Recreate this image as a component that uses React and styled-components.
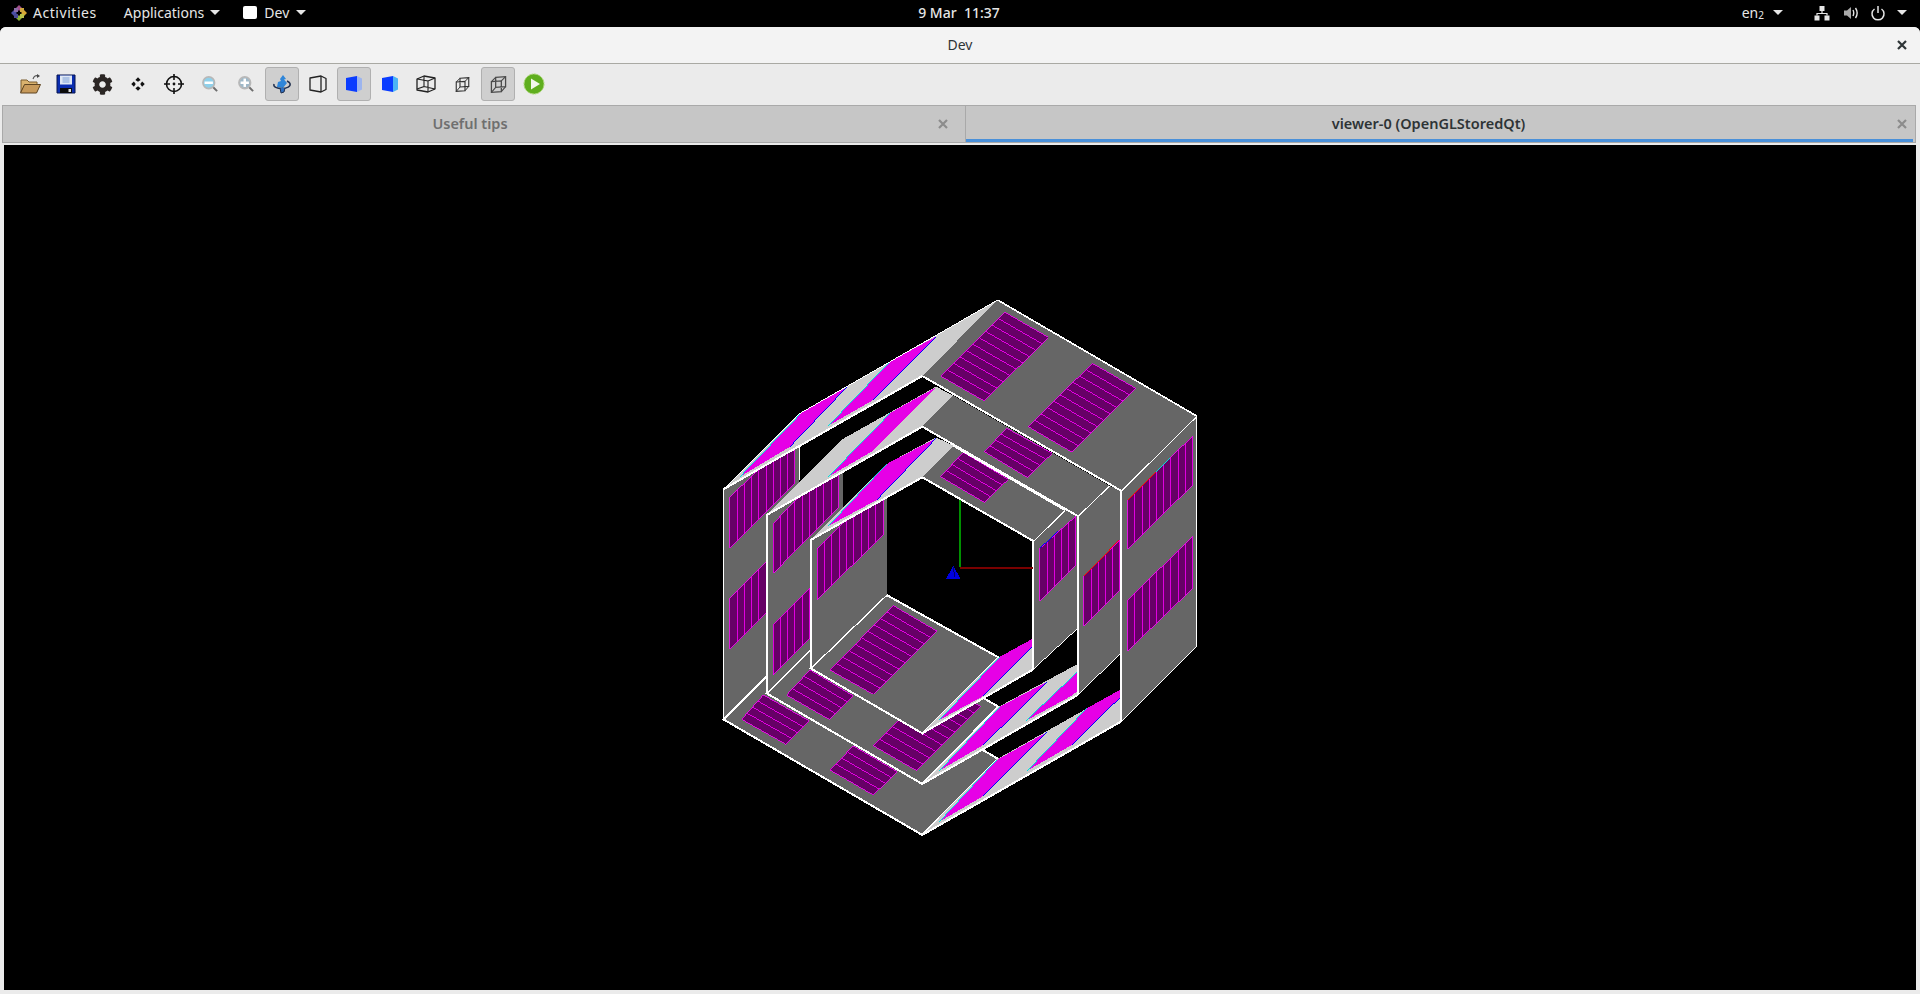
import React from 'react';
import styled, { createGlobalStyle } from 'styled-components';
import { FaCog } from 'react-icons/fa';

const GlobalStyle = createGlobalStyle`
  html, body {
    margin: 0;
    padding: 0;
    background: #000;
  }
  body {
    font-family: "Noto Sans", "Open Sans", sans-serif;
    overflow: hidden;
  }
`;

const Screen = styled.div`
  width: 1920px;
  height: 994px;
  display: flex;
  flex-direction: column;
  background: #000;
`;

const TopBar = styled.div`
  height: 27px;
  flex: none;
  display: grid;
  grid-template-columns: 1fr auto 1fr;
  align-items: center;
  color: #e6e6e6;
  font-size: 14px;
  padding: 0 13px 2px 11px;
  box-sizing: border-box;
`;

const TopLeft = styled.div`
  display: flex;
  align-items: center;
`;

const TopRight = styled.div`
  display: flex;
  align-items: center;
  justify-content: flex-end;
`;

const TopItem = styled.span`
  display: flex;
  align-items: center;
  gap: ${p => p.$gap || 6}px;
  margin-left: ${p => p.$left || 0}px;
  letter-spacing: ${p => p.$track || 0}px;
  white-space: pre;
`;

const Caret = styled.i`
  display: block;
  width: 0;
  height: 0;
  border-left: 5px solid transparent;
  border-right: 5px solid transparent;
  border-top: 5px solid #e6e6e6;
`;

const AppDot = styled.i`
  display: block;
  width: 14px;
  height: 13px;
  background: #fff;
  border-radius: 2px;
`;

const Sub = styled.span`
  font-size: 10px;
  position: relative;
  top: 1px;
`;

const Clock = styled.div`
  font-weight: 500;
  white-space: pre;
`;

const Win = styled.div`
  flex: 1;
  display: flex;
  flex-direction: column;
  background: #ebebeb;
  border-radius: 6px 6px 0 0;
  min-height: 0;
`;

const TitleBar = styled.div`
  height: 37px;
  flex: none;
  display: flex;
  align-items: center;
  justify-content: center;
  position: relative;
  background: #f3f3f3;
  border-bottom: 1px solid #a9a9a3;
  border-radius: 6px 6px 0 0;
  font-size: 14px;
  padding-bottom: 2px;
  color: #2e3436;
  box-sizing: border-box;
`;

const CloseGlyph = styled.svg`
  position: absolute;
  right: ${p => p.$right}px;
  top: 50%;
  width: 10px;
  height: 10px;
  margin-top: -5px;
  stroke: ${p => p.$color};
  stroke-width: 2.2;
  fill: none;
`;

const Toolbar = styled.div`
  height: 41px;
  flex: none;
  display: flex;
  align-items: center;
  gap: 2px;
  padding: 0 0 1px 13px;
  box-sizing: border-box;
`;

const ToolButton = styled.div`
  width: 34px;
  height: 34px;
  box-sizing: border-box;
  display: flex;
  align-items: center;
  justify-content: center;
  border-radius: 3px;
  border: 1px solid ${p => (p.$on ? '#b0b0b0' : 'transparent')};
  background: ${p => (p.$on ? '#cfcfcf' : 'transparent')};
`;

const Tabs = styled.div`
  height: 38px;
  flex: none;
  display: flex;
  padding: 0 4px 0 2px;
  box-sizing: border-box;
`;

const Tab = styled.div`
  flex: none;
  width: ${p => p.$width}px;
  position: relative;
  display: flex;
  align-items: center;
  justify-content: center;
  background: #c6c6c6;
  border: 1px solid #a9a9a9;
  border-left-width: ${p => (p.$first ? 1 : 0)}px;
  box-sizing: border-box;
  font-size: 14.5px;
  font-weight: 600;
  padding: 0 ${p => p.$pad}px 2px 0;
  color: ${p => (p.$active ? '#2e3436' : '#6f6f6f')};
  &::after {
    content: '';
    display: ${p => (p.$active ? 'block' : 'none')};
    position: absolute;
    left: 0;
    right: 2px;
    bottom: 0;
    height: 3px;
    background: #4a90d9;
  }
`;

const Viewer = styled.div`
  flex: 1;
  margin: 2px 4px 4px;
  background: #000;
  min-height: 0;
`;

const Scene = styled.svg`
  display: block;
  width: 100%;
  height: 100%;
  shape-rendering: crispEdges;
`;

const Icon = styled.svg`
  display: block;
  width: ${p => p.$size || 24}px;
  height: ${p => p.$size || 24}px;
`;

const GearIcon = styled(FaCog)`
  display: block;
  width: 21px;
  height: 21px;
  color: #2b2624;
`;

// ---- 3d scene, coordinates are 3x page pixels, origin at (700, 280)

const pts = arr => arr.map(p => p.join(',')).join(' ');
const lerp = (a, b, t) => [a[0] + (b[0] - a[0]) * t, a[1] + (b[1] - a[1]) * t];

const GREY = '#666666';
const LIGHT = '#cdcdcd';

const Panel = ({ c, n }) => {
  const lines = [];
  for (let i = 1; i < n; i++) {
    const a = lerp(c[0], c[3], i / n);
    const b = lerp(c[1], c[2], i / n);
    lines.push(<line key={i} x1={a[0]} y1={a[1]} x2={b[0]} y2={b[1]} stroke="#ff00ff" strokeWidth="2.4" />);
  }
  return (
    <g>
      <polygon points={pts(c)} fill="#660066" stroke="#ff00ff" strokeWidth="2.4" />
      {lines}
    </g>
  );
};

const Strip = ({ c, line = '#0000ff', lineFrom = 3, lineTo = 2 }) => (
  <g>
    <polygon points={pts(c)} fill="#e600e6" />
    <line x1={c[lineFrom][0]} y1={c[lineFrom][1]} x2={c[lineTo][0]} y2={c[lineTo][1]} stroke={line} strokeWidth="3" />
    <line x1={c[0][0]} y1={c[0][1]} x2={c[1][0]} y2={c[1][1]} stroke="#00e0e0" strokeWidth="3" />
  </g>
);

const Face = ({ p, fill = GREY, w = 0 }) => (
  <polygon points={pts(p)} fill={fill} stroke={w ? '#ffffff' : 'none'} strokeWidth={w} />
);

const Edge = ({ d, w = 6 }) => (
  <polyline points={pts(d)} fill="none" stroke="#ffffff" strokeWidth={w} />
);

const Accent = ({ a, b, color }) => (
  <line x1={a[0]} y1={a[1]} x2={b[0]} y2={b[1]} stroke={color} strokeWidth="3" />
);

const Model = () => (
  <g transform="translate(700 280) scale(0.33333)">
    {/* bottom plates and left walls */}
    <Face p={[[70, 1318], [667, 1665], [895, 1437], [298, 1090]]} w={6} />
    <Panel c={[[190, 1245], [328, 1323], [258, 1393], [125, 1318]]} n={4} />
    <Panel c={[[460, 1398], [592, 1475], [520, 1545], [390, 1470]]} n={4} />
    <Face p={[[70, 628], [298, 498], [298, 1090], [70, 1318]]} />
    <Panel c={[[90, 652], [90, 805], [285, 610], [285, 460]]} n={9} />
    <Panel c={[[90, 955], [90, 1108], [285, 913], [285, 760]]} n={9} />
    <Edge d={[[298, 1090], [70, 1318], [70, 628]]} w={4} />
    <Edge d={[[298, 600], [298, 498]]} w={3} />

    <Face p={[[200, 1240], [667, 1512], [895, 1280], [430, 1010]]} w={6} />
    <Panel c={[[330, 1170], [460, 1248], [388, 1318], [260, 1245]]} n={4} />
    <Panel c={[[712, 1205], [842, 1280], [650, 1472], [520, 1397]]} n={10} />
    <Face p={[[200, 705], [430, 575], [430, 1010], [200, 1240]]} />
    <Panel c={[[220, 730], [220, 880], [415, 682], [415, 530]]} n={9} />
    <Panel c={[[220, 1033], [220, 1185], [415, 990], [415, 838]]} n={9} />
    <Edge d={[[430, 1010], [200, 1240]]} w={3} />
    <Edge d={[[200, 1240], [200, 705]]} />

    <Face p={[[332, 1165], [667, 1360], [895, 1132], [560, 945]]} w={6} />
    <Panel c={[[580, 977], [710, 1053], [520, 1243], [390, 1170]]} n={10} />
    <Face p={[[332, 780], [560, 650], [560, 945], [332, 1165]]} />
    <Panel c={[[352, 805], [352, 958], [550, 765], [550, 610]]} n={9} />
    <Edge d={[[560, 945], [332, 1165]]} w={3} />
    <Edge d={[[332, 1165], [332, 780]]} />

    {/* light strips at the lower right */}
    <Face p={[[667, 1665], [1263, 1325], [1263, 1228], [890, 1438]]} fill={LIGHT} />
    <Strip c={[[718, 1625], [890, 1440], [1040, 1357], [850, 1548]]} />
    <Strip c={[[982, 1472], [1160, 1285], [1263, 1228], [1263, 1250], [1115, 1395]]} lineFrom={4} lineTo={3} />
    <Edge d={[[667, 1665], [1263, 1325]]} />
    <Face p={[[667, 1512], [1133, 1245], [1133, 1152], [900, 1278]]} fill={LIGHT} />
    <Strip c={[[718, 1472], [900, 1280], [1042, 1205], [850, 1395]]} />
    <Strip c={[[978, 1322], [1133, 1175], [1133, 1233], [1110, 1250]]} line="#ff0000" lineFrom={0} lineTo={1} />
    <Edge d={[[667, 1512], [1133, 1245]]} />
    <Face p={[[667, 1360], [1000, 1168], [1000, 1075], [895, 1133]]} fill={LIGHT} />
    <Strip c={[[718, 1320], [900, 1130], [1000, 1075], [1000, 1098], [850, 1248]]} lineFrom={4} lineTo={3} />
    <Edge d={[[667, 1360], [1000, 1168]]} />

    {/* right walls */}
    <Face p={[[1000, 783], [1095, 690], [1133, 708], [1133, 1045], [1000, 1168]]} />
    <Panel c={[[1020, 805], [1020, 962], [1128, 855], [1128, 708]]} n={5} />
    <Edge d={[[1095, 690], [1000, 783], [1000, 1168]]} />
    <Edge d={[[1000, 1168], [1133, 1045]]} w={3} />
    <Face p={[[1133, 708], [1228, 617], [1263, 632], [1263, 1120], [1133, 1245]]} />
    <Panel c={[[1152, 888], [1152, 1037], [1260, 930], [1260, 780]]} n={5} />
    <Edge d={[[1228, 617], [1133, 708], [1133, 1245]]} />
    <Edge d={[[1133, 1245], [1263, 1120]]} w={3} />
    <Face p={[[1263, 632], [1490, 408], [1490, 1100], [1263, 1325]]} />
    <Panel c={[[1283, 660], [1283, 808], [1478, 615], [1478, 468]]} n={9} />
    <Panel c={[[1283, 960], [1283, 1113], [1478, 925], [1478, 770]]} n={9} />
    <Edge d={[[1490, 408], [1263, 632], [1263, 1325]]} />
    <Edge d={[[1263, 1325], [1490, 1100], [1490, 408]]} w={3} />
    <Accent a={[1283, 660]} b={[1370, 575]} color="#ff0000" />
    <Accent a={[1370, 575]} b={[1410, 535]} color="#00e0e0" />
    <Accent a={[1152, 888]} b={[1258, 780]} color="#ff0000" />
    <Accent a={[1020, 805]} b={[1075, 752]} color="#0000ff" />

    {/* top plates, inner one first */}
    <Face p={[[760, 497], [1095, 690], [1000, 783], [667, 592]]} />
    <Panel c={[[790, 517], [925, 598], [853, 667], [722, 590]]} n={4} />
    <Edge d={[[1000, 783], [667, 592]]} />
    <Edge d={[[760, 497], [1095, 690]]} />
    <Face p={[[332, 780], [560, 552], [708, 472], [760, 497], [667, 592]]} fill={LIGHT} />
    <Strip c={[[385, 738], [560, 552], [708, 475], [530, 660]]} />
    <Edge d={[[332, 780], [667, 592]]} />

    <Face p={[[760, 347], [1228, 617], [1133, 708], [667, 440]]} />
    <Panel c={[[920, 445], [1057, 520], [982, 592], [853, 515]]} n={4} />
    <Edge d={[[1133, 708], [667, 440]]} />
    <Face p={[[200, 705], [430, 476], [708, 320], [760, 347], [667, 440]]} fill={LIGHT} />
    <Strip c={[[385, 590], [572, 398], [708, 322], [520, 512]]} line="#ff0000" lineFrom={0} lineTo={1} />
    <Edge d={[[200, 705], [667, 440]]} />

    <Face p={[[70, 628], [300, 400], [893, 60], [667, 288]]} fill={LIGHT} />
    <Strip c={[[120, 590], [305, 398], [440, 322], [270, 500]]} />
    <Strip c={[[385, 437], [570, 245], [708, 170], [520, 360]]} />
    <Edge d={[[70, 628], [667, 288]]} />
    <Edge d={[[70, 628], [300, 400], [893, 60]]} w={3} />
    <Face p={[[893, 60], [1490, 408], [1263, 632], [667, 288]]} />
    <Panel c={[[915, 97], [1045, 172], [853, 363], [722, 288]]} n={10} />
    <Panel c={[[1177, 250], [1307, 325], [1115, 516], [985, 440]]} n={10} />
    <Edge d={[[1263, 632], [667, 288]]} />
    <Edge d={[[893, 60], [1490, 408]]} w={5} />

    {/* axes */}
    <line x1="779" y1="660" x2="779" y2="862" stroke="#009000" strokeWidth="6" />
    <line x1="779" y1="863" x2="1000" y2="863" stroke="#7a0000" strokeWidth="6" />
    <polygon points="760,858 783,898 737,898" fill="#0000e0" />
    <line x1="760" y1="862" x2="764" y2="890" stroke="#000070" strokeWidth="3" />
  </g>
);

// ---- toolbar icons

const FolderIcon = () => (
  <Icon viewBox="0 0 24 24">
    <path d="M3 8h6l2 2h8v3H7L3 20z" fill="#d9b26e" stroke="#7a5c2e" strokeWidth="1" />
    <path d="M6.500 12.500h16L18.500 21H2.500z" fill="#c79a5b" stroke="#5e4522" strokeWidth="1" />
    <path d="M15 7c1-3 3-4 5-3" fill="none" stroke="#555" strokeWidth="1.1" />
    <path d="M19 2l3 2-3 2z" fill="#444" />
  </Icon>
);

const SaveIcon = () => (
  <Icon viewBox="0 0 24 24">
    <path d="M3 3h18v18H3z" fill="#0a2db0" stroke="#06144f" strokeWidth="1" />
    <path d="M6 3.500h12v9H6z" fill="#dfe8f5" />
    <path d="M8.500 6h7M8.500 8h7M8.500 10h7" stroke="#7d9fd6" strokeWidth="1" />
    <path d="M6 16h12v5H6z" fill="#0b0b0b" />
    <path d="M14.500 17h2.500v3h-2.500z" fill="#dddddd" />
  </Icon>
);

const MoveIcon = () => (
  <Icon viewBox="0 0 24 24" $size={18}>
    <path d="M12 3l3.500 3.500-3.500 2.500-3.500-2.500zM12 21l3.500-3.500-3.500-2.500-3.500 2.500zM3 12l3.500-3.500 2.500 3.500-2.500 3.500zM21 12l-3.500-3.500-2.500 3.500 2.500 3.500z" fill="#111" />
  </Icon>
);

const TargetIcon = () => (
  <Icon viewBox="0 0 24 24">
    <circle cx="12" cy="12" r="7.500" fill="none" stroke="#111" strokeWidth="1.6" />
    <path d="M12 2v6M12 16v6M2 12h6M16 12h6" stroke="#111" strokeWidth="1.6" />
    <circle cx="12" cy="12" r="1.400" fill="#111" />
  </Icon>
);

const ZoomIcon = ({ plus }) => (
  <Icon viewBox="0 0 24 24" $size={20}>
    <path d="M15 15l5.500 5.500" stroke="#6d6d6d" strokeWidth="2.4" />
    <circle cx="10.500" cy="10.500" r="7" fill={plus ? '#9fb9c9' : '#8fd0ea'} stroke="#b8b8b8" strokeWidth="2" />
    <path d="M5.500 10.500h10" stroke="#fff" strokeWidth="3" />
    {plus && <path d="M10.500 5.500v10" stroke="#fff" strokeWidth="3" />}
  </Icon>
);

const RotateIcon = () => (
  <Icon viewBox="0 0 24 24">
    <path d="M13 3l3 4-2 .5 3 3.500-4 5-6-1 1-5 3-1-1-2z" fill="#2f86d9" />
    <path d="M4 12c-1 3 3 4.500 8 4.500s9-2 8-5c-.5-1.500-2-2-3-2.500" fill="none" stroke="#20304f" strokeWidth="1.5" />
    <path d="M10 16l1 5 3-1 1-4" fill="#2f6fc0" stroke="#20304f" strokeWidth="1" />
  </Icon>
);

const BoxOutlineIcon = () => (
  <Icon viewBox="0 0 24 24">
    <path d="M4 6l11-2 5 2.500v11L15 20 4 18z" fill="none" stroke="#222" strokeWidth="1.3" strokeLinejoin="round" />
    <path d="M15 4v16" stroke="#222" strokeWidth="1.3" />
  </Icon>
);

const BoxSolidIcon = ({ bright }) => (
  <Icon viewBox="0 0 24 24">
    <path d="M15 4l5 2.500v11L15 20z" fill={bright ? '#4cb4f5' : '#9cb4ee'} />
    <path d="M4 6l11-2v16L4 18z" fill="#0a3cff" />
  </Icon>
);

const WireOpenIcon = () => (
  <Icon viewBox="0 0 24 24">
    <path d="M3 7l7-3 11 2v11l-7 3-11-2z" fill="none" stroke="#222" strokeWidth="1.3" strokeLinejoin="round" />
    <path d="M3 7l11 2v11M14 9l7-3M10 4v10.500l-7 2.500M10 14.500l11 2.500" fill="none" stroke="#222" strokeWidth="1.1" />
  </Icon>
);

const WireCubeIcon = ({ size = 18, color = '#333' }) => (
  <Icon viewBox="0 0 24 24" $size={size}>
    <path d="M2 8l14-1v15L2 23zM8 2l14-1v14l-14 1z" fill="none" stroke={color} strokeWidth="1.8" />
    <path d="M2 8l6-6M16 7l6-6M16 22l6-7M2 23l6-7" fill="none" stroke={color} strokeWidth="1.6" />
  </Icon>
);

const PlayIcon = () => (
  <Icon viewBox="0 0 24 24">
    <circle cx="12" cy="12" r="10" fill="#5fae1e" stroke="#a8d66f" strokeWidth="1" strokeDasharray="2 0.6" />
    <path d="M9 6.500l9 5.500-9 5.500z" fill="#f2f7ea" />
  </Icon>
);

// ---- top bar icons

const DistroLogo = () => (
  <Icon viewBox="0 0 16 16" $size={16}>
    <path d="M8 0l3 3-3 3-3-3z" fill="#a14f8c" />
    <path d="M16 8l-3 3-3-3 3-3z" fill="#f0b93a" opacity="0.9" />
    <path d="M8 16l-3-3 3-3 3 3z" fill="#8bb13a" />
    <path d="M0 8l3-3 3 3-3 3z" fill="#4b4fa5" />
    <path d="M3 3h4v4H3z" fill="#8a6da8" />
    <path d="M9 3h4v4H9z" fill="#cfa63f" />
    <path d="M9 9h4v4H9z" fill="#b9c24a" />
    <path d="M3 9h4v4H3z" fill="#4a4a96" />
  </Icon>
);

const NetworkIcon = () => (
  <Icon viewBox="0 0 16 16" $size={16}>
    <path d="M5.500 1h5v5h-5zM0.500 10.500h5v5h-5zM10.500 10.500h5v5h-5z" fill="#e6e6e6" />
    <path d="M8 6v2.500M3 10.500v-2h10v2" fill="none" stroke="#e6e6e6" strokeWidth="1.2" />
  </Icon>
);

const VolumeIcon = () => (
  <Icon viewBox="0 0 16 16" $size={16}>
    <path d="M1 5.500h3L8 2v12l-4-3.500H1z" fill="#a9a9a9" />
    <path d="M10 5c1 2 1 4 0 6M12.500 3c2 3 2 7 0 10" fill="none" stroke="#e6e6e6" strokeWidth="1.4" />
  </Icon>
);

const PowerIcon = () => (
  <Icon viewBox="0 0 16 16" $size={16}>
    <path d="M4.500 4a6 6 0 1 0 7 0" fill="none" stroke="#e6e6e6" strokeWidth="1.5" />
    <path d="M8 1v7" stroke="#e6e6e6" strokeWidth="1.5" />
  </Icon>
);

const Close = ({ right, color }) => (
  <CloseGlyph viewBox="0 0 10 10" $right={right} $color={color}>
    <path d="M1 1l8 8M9 1l-8 8" />
  </CloseGlyph>
);

const tools = [
  { key: 'open', icon: <FolderIcon /> },
  { key: 'save', icon: <SaveIcon /> },
  { key: 'settings', icon: <GearIcon /> },
  { key: 'move', icon: <MoveIcon /> },
  { key: 'target', icon: <TargetIcon /> },
  { key: 'zoomout', icon: <ZoomIcon /> },
  { key: 'zoomin', icon: <ZoomIcon plus /> },
  { key: 'rotate', icon: <RotateIcon />, on: true },
  { key: 'outline', icon: <BoxOutlineIcon /> },
  { key: 'solid', icon: <BoxSolidIcon />, on: true },
  { key: 'solid2', icon: <BoxSolidIcon bright /> },
  { key: 'wire', icon: <WireOpenIcon /> },
  { key: 'wire2', icon: <WireCubeIcon size={15} /> },
  { key: 'wire3', icon: <WireCubeIcon size={17} color="#4a4a4a" />, on: true },
  { key: 'play', icon: <PlayIcon /> },
];

export default function App() {
  return (
    <Screen>
      <GlobalStyle />
      <TopBar>
        <TopLeft>
          <TopItem $track={0.55}><DistroLogo />Activities</TopItem>
          <TopItem $left={27} $gap={6}>Applications<Caret /></TopItem>
          <TopItem $left={23} $gap={7}><AppDot />Dev<Caret /></TopItem>
        </TopLeft>
        <Clock>9 Mar  11:37</Clock>
        <TopRight>
          <TopItem $gap={9}><span>en<Sub>2</Sub></span><Caret /></TopItem>
          <TopItem $left={31}><NetworkIcon /></TopItem>
          <TopItem $left={13}><VolumeIcon /></TopItem>
          <TopItem $left={11} $gap={11}><PowerIcon /><Caret /></TopItem>
        </TopRight>
      </TopBar>
      <Win>
        <TitleBar>
          Dev
          <Close right={13} color="#2e3436" />
        </TitleBar>
        <Toolbar>
          {tools.map(t => (
            <ToolButton key={t.key} $on={t.on}>{t.icon}</ToolButton>
          ))}
        </Toolbar>
        <Tabs>
          <Tab $width={964} $first $pad={28}>
            Useful tips
            <Close right={17} color="#8c8c8c" />
          </Tab>
          <Tab $width={950} $active $pad={24}>
            viewer-0 (OpenGLStoredQt)
            <Close right={8} color="#8c8c8c" />
          </Tab>
        </Tabs>
        <Viewer>
          <Scene viewBox="4 145 1912 845">
            <Model />
          </Scene>
        </Viewer>
      </Win>
    </Screen>
  );
}
